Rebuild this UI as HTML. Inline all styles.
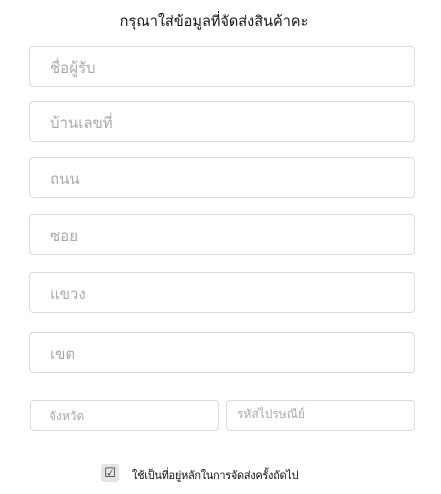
<!DOCTYPE html>
<html><head><meta charset="utf-8"><style>
body{margin:0;width:441px;height:494px;background:#fff;font-family:"Liberation Sans","DejaVu Sans",sans-serif;position:relative;overflow:hidden}
.t{position:absolute;top:10px;left:0;width:428px;text-align:center;font-size:14.5px;color:#111}
.b{position:absolute;border:1px solid #dcdcdc;border-radius:4px;box-sizing:border-box;color:#aaa;font-size:15px;line-height:44px;padding-left:20px}
.s{font-size:12px;line-height:30px}
.cb{position:absolute;left:101px;top:464px;width:18px;height:18px;background:#e4e4e4;border-radius:3px;font-size:13px;line-height:18px;text-align:center;color:#333}
.l{position:absolute;left:132px;top:466px;font-size:11px;color:#111;letter-spacing:-0.3px}
</style></head><body>
<div class="t">กรุณาใส่ข้อมูลที่จัดส่งสินค้าคะ</div>
<div class="b" style="left:29px;top:46px;width:386px;height:41px">ชื่อผู้รับ</div>
<div class="b" style="left:29px;top:101px;width:386px;height:41px">บ้านเลขที่</div>
<div class="b" style="left:29px;top:157px;width:386px;height:41px">ถนน</div>
<div class="b" style="left:29px;top:214px;width:386px;height:41px">ซอย</div>
<div class="b" style="left:29px;top:272px;width:386px;height:41px">แขวง</div>
<div class="b" style="left:29px;top:332px;width:386px;height:41px">เขต</div>
<div class="b s" style="left:30px;top:400px;width:189px;height:31px;padding-left:18px">จังหวัด</div>
<div class="b s" style="left:226px;top:400px;width:189px;height:31px;padding-left:10px;line-height:26px">รหัสไปรษณีย์</div>
<div class="cb">☑</div>
<div class="l">ใช้เป็นที่อยู่หลักในการจัดส่งครั้งถัดไป</div>
</body></html>
